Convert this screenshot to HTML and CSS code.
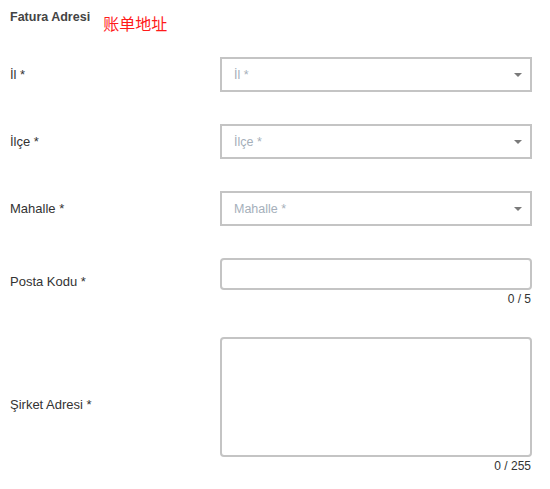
FILE: index.html
```html
<!DOCTYPE html>
<html lang="tr">
<head>
<meta charset="utf-8">
<link rel="stylesheet" href="styles.css">
</head>
<body>
<div class="form">
  <div class="heading">
    <span class="title">Fatura Adresi</span>
    <span class="note">账单地址</span>
  </div>

  <div class="row row-select">
    <label class="label">İl *</label>
    <div class="field">
      <div class="select"><span class="ph">İl *</span><span class="caret"></span></div>
    </div>
  </div>

  <div class="row row-select">
    <label class="label">İlçe *</label>
    <div class="field">
      <div class="select"><span class="ph">İlçe *</span><span class="caret"></span></div>
    </div>
  </div>

  <div class="row row-select">
    <label class="label">Mahalle *</label>
    <div class="field">
      <div class="select"><span class="ph">Mahalle *</span><span class="caret"></span></div>
    </div>
  </div>

  <div class="row row-input">
    <label class="label">Posta Kodu *</label>
    <div class="field">
      <div class="input"></div>
      <div class="counter">0 / 5</div>
    </div>
  </div>

  <div class="row row-area">
    <label class="label">Şirket Adresi *</label>
    <div class="field">
      <div class="textarea"></div>
      <div class="counter">0 / 255</div>
    </div>
  </div>
</div>
</body>
</html>
```

FILE: styles.css
```css
html, body {
  margin: 0;
  padding: 0;
  background: #ffffff;
}

body {
  font-family: "Liberation Sans", Arial, sans-serif;
  color: #333333;
}

.form {
  padding: 0 0 0 10px;
  width: 522px;
}

.heading {
  display: flex;
  align-items: flex-start;
  height: 57px;
}

.title {
  font-size: 12.5px;
  font-weight: bold;
  color: #444444;
  line-height: 14px;
  margin-top: 10px;
}

.note {
  font-family: "Noto Sans CJK SC", sans-serif;
  font-size: 16px;
  line-height: 20px;
  color: #ff1a1a;
  margin-left: 13px;
  margin-top: 13px;
}

.row {
  display: grid;
  grid-template-columns: 210px 312px;
  align-items: center;
}

.row-select {
  margin-bottom: 32px;
}

.row-input {
  margin-bottom: 31px;
}

.label {
  font-size: 13px;
  line-height: 16px;
  color: #333333;
}

.select {
  box-sizing: border-box;
  height: 35px;
  border: 2px solid #c4c4c4;
  display: flex;
  align-items: center;
  justify-content: space-between;
  padding: 0 8px 0 12px;
}

.ph {
  font-size: 12.5px;
  color: #a5afba;
}

.caret {
  width: 0;
  height: 0;
  border-left: 4px solid transparent;
  border-right: 4px solid transparent;
  border-top: 4px solid #7a7a7a;
  margin-top: 1px;
}

.input {
  box-sizing: border-box;
  height: 32px;
  border: 2px solid #c4c4c4;
  border-radius: 4px;
}

.textarea {
  box-sizing: border-box;
  height: 120px;
  border: 2px solid #c4c4c4;
  border-radius: 4px;
}

.counter {
  text-align: right;
  font-size: 12px;
  line-height: 14px;
  color: #333333;
  margin-top: 2px;
  padding-right: 1px;
}
```
